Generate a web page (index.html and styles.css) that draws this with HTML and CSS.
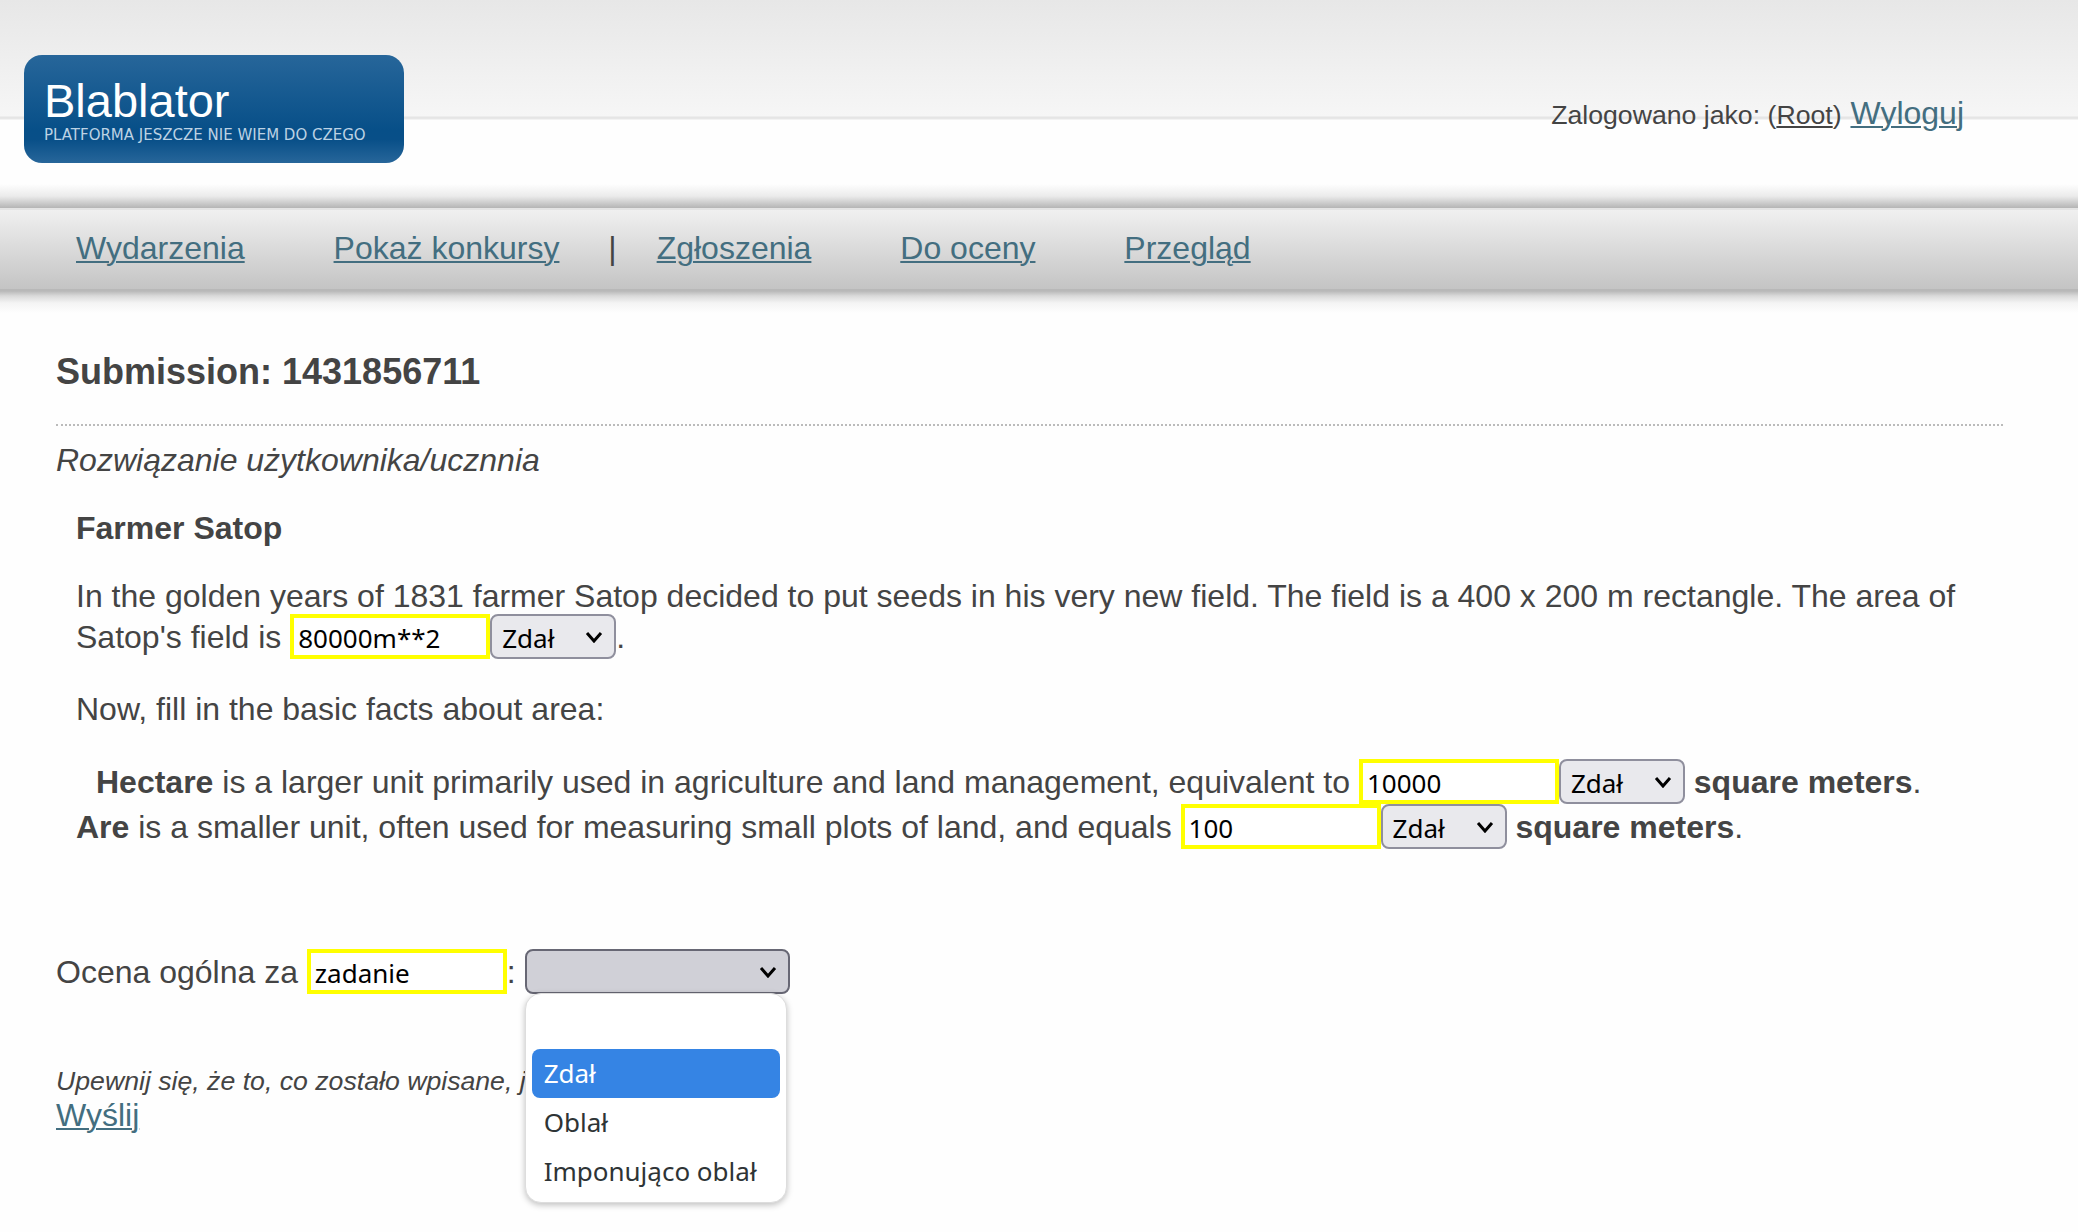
FILE: index.html
```html
<!DOCTYPE html>
<html lang="pl">
<head>
    <meta charset="UTF-8">
    <meta name="viewport" content="width=device-width, initial-scale=1.0">
    <title>Blablator</title>
    <link rel="stylesheet" href="styles.css">
</head>
<body>
    <header class="header">
        <div class="logo">
            <div class="logo-name">Blablator</div>
            <div class="logo-tagline">PLATFORMA JESZCZE NIE WIEM DO CZEGO</div>
        </div>
        <div class="login">
            <small>Zalogowano jako: (<a class="user" href="#">Root</a>)</small>
            <a href="#">Wyloguj</a>
        </div>
    </header>

    <nav class="menu">
        <a href="#">Wydarzenia</a>
        <a href="#">Pokaż konkursy</a>
        |<a href="#">Zgłoszenia</a>
        <a href="#">Do oceny</a>
        <a href="#">Przegląd</a>
    </nav>

    <main class="content">
        <h2>Submission: 1431856711</h2>
        <em>Rozwiązanie użytkownika/ucznnia</em>

        <form id="gradeForm" method="POST">
            <div class="solution">
                <h3>Farmer Satop</h3>
                <p>In the golden years of 1831 farmer Satop decided to put seeds in his very new field. The field is a 400 x 200 m rectangle. The area of Satop's field is <input type="text" name="field" value="80000m**2" aria-label="Satop's field"><select name="field_grade" aria-label="Ocena: field"><option>Zdał</option><option>Oblał</option></select>.</p>
                <p>Now, fill in the basic facts about area:</p>
                <p class="facts"><b>Hectare</b> is a larger unit primarily used in agriculture and land management, equivalent to <input type="text" name="hectare" value="10000" aria-label="Hectare"><select name="hectare_grade" aria-label="Ocena: hectare"><option>Zdał</option><option>Oblał</option></select> <b>square meters</b>.<br>
                <b>Are</b> is a smaller unit, often used for measuring small plots of land, and equals <input type="text" name="are" value="100" aria-label="Are"><select name="are_grade" aria-label="Ocena: are"><option>Zdał</option><option>Oblał</option></select> <b>square meters</b>.</p>
            </div>

            <div class="overall">
                <label for="task">Ocena ogólna za</label>
                <input type="text" id="task" name="task" value="zadanie">:
                <span class="dropdown">
                    <select class="opened" name="overall_grade" aria-label="Ocena ogólna"><option></option></select>
                    <!-- opened list of grades -->
                    <ul class="options" role="listbox">
                        <li role="option"></li>
                        <li class="active" role="option" aria-selected="true">Zdał</li>
                        <li role="option">Oblał</li>
                        <li role="option">Imponująco oblał</li>
                    </ul>
                </span>
            </div>

            <div class="note"><i>Upewnij się, że to, co zostało wpisane, j</i></div>
            <a href="#">Wyślij</a>
        </form>
    </main>
</body>
</html>
```
FILE: styles.css
```css
body {
    min-height: 100vh;
    margin: 0;
    background: #fefefe;
    color: #444;
    font-family: "Liberation Sans", Arial, sans-serif;
    font-size: 32px;
    line-height: 36px;
}

a {
    color: #436e80;
    text-underline-offset: 2px;
    text-decoration-thickness: 2px;
}

.header {
    display: flex;
    justify-content: space-between;
    align-items: flex-start;
    box-sizing: border-box;
    height: 208px;
    padding: 55px 114px 0 24px;
    background:
        linear-gradient(rgba(180, 180, 180, 0), rgba(180, 180, 180, 0.25) 50%, #b5b5b5) bottom / 100% 24px no-repeat,
        linear-gradient(#e7e7e7, #f6f6f6 116px, #e4e4e4 117px, #e8e8e8 119px, #fefefe 120px);
}

.logo {
    box-sizing: border-box;
    width: 380px;
    height: 108px;
    padding: 20px 20px 0;
    border-radius: 18px;
    background: linear-gradient(#27669a, #074f88 70%, #084f88 78%, #27669a);
    color: #fff;
}

.logo-name {
    font-size: 47px;
    line-height: 52px;
}

.logo-tagline {
    color: #bcd2e4;
    font-family: "DejaVu Sans", sans-serif;
    font-size: 15px;
    line-height: 16px;
    white-space: nowrap;
}

.login {
    margin-top: 40px;
}

.login small,
.note {
    font-size: smaller;
}

.login .user {
    color: #444;
}

.menu {
    padding: 20px 36px 23px;
    border-top: 2px solid #e4e4e4;
    background: linear-gradient(#f0f0f0, #c4c4c4);
}

.menu a {
    padding: 0 40px;
}

.content {
    padding: 62px 75px 32px 56px;
    background: linear-gradient(#b8b8b8 2px, #dadada 7px, #f4f4f4 14px, #fefefe 24px) top / 100% 24px no-repeat;
}

h2 {
    margin: 0 0 16px;
    padding-bottom: 32px;
    border-bottom: 2px dotted #bbb;
    font-size: 36px;
    line-height: 41px;
}

h3 {
    margin: 32px 0;
    font-size: 32px;
}

.solution {
    padding: 0 20px;
}

.solution p {
    margin: 32px 0;
}

.solution .facts {
    margin-bottom: 100px;
    text-indent: 20px;
}

input,
select {
    box-sizing: border-box;
    height: 45px;
    margin: 0;
    font-family: "Noto Sans", sans-serif;
    font-size: 26px;
    color: #000;
    text-indent: 0;
}

input {
    width: 200px;
    padding: 2px 4px 0;
    border: 4px solid #ff0;
    background: #fff;
}

select {
    appearance: none;
    width: 126px;
    padding: 2px 32px 0 10px;
    border: 2px solid #8f8f9d;
    border-radius: 8px;
    background: #e9e9ed url("data:image/svg+xml,%3Csvg xmlns='http://www.w3.org/2000/svg' width='18' height='12'%3E%3Cpath d='M2 2l7 8 7-8' fill='none' stroke='%23000' stroke-width='3'/%3E%3C/svg%3E") right 11px center no-repeat;
}

select.opened {
    width: 265px;
    border-color: #676774;
    background-color: #d0d0d7;
}

.dropdown {
    position: relative;
}

.options {
    position: absolute;
    top: 100%;
    left: 0;
    box-sizing: border-box;
    width: 262px;
    margin: 3px 0 0;
    padding: 6px;
    border: 1px solid #ddd;
    border-radius: 16px;
    background: #fff;
    box-shadow: 0 2px 6px rgba(0, 0, 0, 0.25);
    color: #2e3436;
    font-family: "Noto Sans", sans-serif;
    font-size: 26px;
    line-height: 49px;
    list-style: none;
}

.options li {
    height: 49px;
    padding-left: 12px;
    border-radius: 8px;
    white-space: nowrap;
}

.options .active {
    background: #3584e4;
    color: #fff;
}

.note {
    margin-top: 72px;
    line-height: 31px;
}
```
